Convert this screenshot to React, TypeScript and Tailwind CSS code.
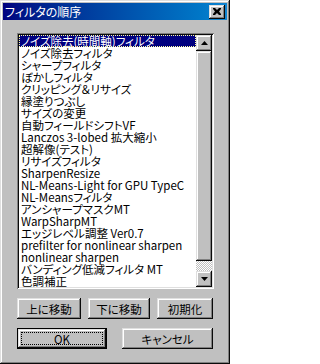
const filters = [
  "ノイズ除去(時間軸)フィルタ",
  "ノイズ除去フィルタ",
  "シャープフィルタ",
  "ぼかしフィルタ",
  "クリッピング＆リサイズ",
  "縁塗りつぶし",
  "サイズの変更",
  "自動フィールドシフトVF",
  "Lanczos 3-lobed 拡大縮小",
  "超解像(テスト)",
  "リサイズフィルタ",
  "SharpenResize",
  "NL-Means-Light for GPU TypeC",
  "NL-Meansフィルタ",
  "アンシャープマスクMT",
  "WarpSharpMT",
  "エッジレベル調整 Ver0.7",
  "prefilter for nonlinear sharpen",
  "nonlinear sharpen",
  "バンディング低減フィルタ MT",
  "色調補正",
];

const raised =
  "bg-[#c0c0c0] shadow-[inset_-1px_-1px_#0a0a0a,inset_1px_1px_#dfdfdf,inset_-2px_-2px_#808080,inset_2px_2px_#fff]";

function Arrow({ up }: { up?: boolean }) {
  return (
    <svg width="7" height="4" viewBox="0 0 7 4" className="block">
      {up ? <polygon points="3.5,0 7,4 0,4" fill="#000" /> : <polygon points="0,0 7,0 3.5,4" fill="#000" />}
    </svg>
  );
}

function Button({ label, w }: { label: string; w: string }) {
  return (
    <button className={`${w} h-[21px] ${raised} flex items-center justify-center text-black`}>
      {label}
    </button>
  );
}

export default function App() {
  return (
    <div className="w-[230px] h-[364px] bg-[#c0c0c0] p-[3px] flex flex-col shadow-[inset_-1px_-1px_#0a0a0a,inset_1px_1px_#dfdfdf,inset_-2px_-2px_#808080,inset_2px_2px_#fff] font-['Noto_Sans_CJK_JP',sans-serif] text-[11.5px] leading-[12px] [font-feature-settings:'palt'] select-none">
      {/* title bar */}
      <div className="h-[17px] flex items-center justify-between pl-[2px] pr-[2px] bg-linear-to-r from-[#000080] to-[#1084d0]">
        <span className="text-white text-[12px]">フィルタの順序</span>
        <div className={`w-[16px] h-[14px] ${raised} flex items-center justify-center`}>
          <svg width="8" height="7" viewBox="0 0 8 7" className="block">
            <path d="M0 0h2l2 2 2-2h2v1L6 3.5 8 6v1H6L4 5 2 7H0V6l2-2.5L0 1z" fill="#000" />
          </svg>
        </div>
      </div>

      <div className="flex flex-col pl-[14px] pt-[13px]">
        {/* list box */}
        <div className="w-[197px] h-[256px] bg-white p-[2px] flex shadow-[inset_1px_1px_#808080,inset_-1px_-1px_#fff,inset_2px_2px_#0a0a0a,inset_-2px_-2px_#dfdfdf]">
          <div className="flex-1 flex flex-col">
            {filters.map((f, i) => (
              <div
                key={f}
                className={
                  i === 0
                    ? "h-[12px] shrink-0 pl-[2px] whitespace-nowrap bg-[#000080] text-white outline-1 outline-dotted outline-[#ffff9f] -outline-offset-1"
                    : "h-[12px] shrink-0 pl-[2px] whitespace-nowrap text-black"
                }
              >
                {f}
              </div>
            ))}
          </div>
          <div className="w-[16px] flex flex-col">
            <div className={`h-[16px] ${raised} flex items-center justify-center`}>
              <Arrow up />
            </div>
            <div className={`h-[210px] ${raised}`} />
            <div className="h-[10px] bg-[repeating-conic-gradient(#fff_0%_25%,#c0c0c0_0%_50%)] bg-[length:2px_2px]" />
            <div className={`h-[16px] ${raised} flex items-center justify-center`}>
              <Arrow />
            </div>
          </div>
        </div>

        {/* move buttons */}
        <div className="w-[196px] mt-[9px] flex justify-between">
          <Button label="上に移動" w="w-[64px]" />
          <Button label="下に移動" w="w-[62px]" />
          <Button label="初期化" w="w-[56px]" />
        </div>

        {/* OK / cancel */}
        <div className="w-[196px] mt-[9px] flex justify-between">
          <div className="w-[90px] h-[21px] border border-black flex">
            <button className={`flex-1 ${raised} p-[3px] flex`}>
              <span className="flex-1 border border-dotted border-black flex items-center justify-center text-black">
                OK
              </span>
            </button>
          </div>
          <Button label="キャンセル" w="w-[91px]" />
        </div>
      </div>
    </div>
  );
}
